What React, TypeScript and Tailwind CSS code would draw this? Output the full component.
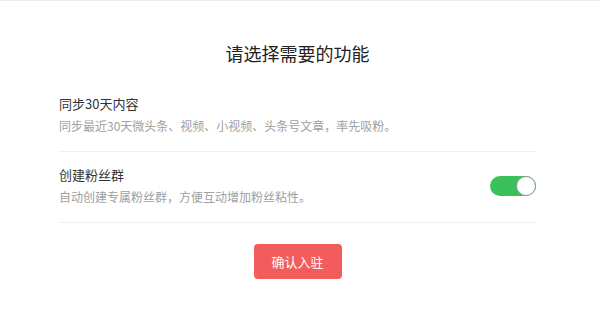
import React from "react";

export default function App() {
  return (
    <div
      className="w-[600px] h-[322px] bg-white border-t border-[#ededed] overflow-hidden"
      style={{ fontFamily: '"Noto Sans CJK SC", "Noto Sans", sans-serif' }}
    >
      <div className="w-[595px]">
        <div className="pt-[40px] flex flex-col items-center">
          <h1 className="text-[18px] leading-[24px] text-[#222] font-normal">请选择需要的功能</h1>
        </div>
        <div className="mx-[59px] mt-[16px]">
          <div className="flex items-center justify-between pt-[13px] pb-[15px] border-b border-[#f0f0f0]">
            <div>
              <div className="text-[13px] leading-[20px] text-[#333]">同步30天内容</div>
              <div className="mt-[2px] text-[12px] leading-[20px] text-[#a0a0a0]">
                同步最近30天微头条、视频、小视频、头条号文章，率先吸粉。
              </div>
            </div>
          </div>
          <div className="flex items-center justify-between pt-[13px] pb-[15px] border-b border-[#f0f0f0]">
            <div>
              <div className="text-[13px] leading-[20px] text-[#333]">创建粉丝群</div>
              <div className="mt-[2px] text-[12px] leading-[20px] text-[#a0a0a0]">
                自动创建专属粉丝群，方便互动增加粉丝粘性。
              </div>
            </div>
            <div className="w-[46px] h-[20px] rounded-full bg-[#3bc15a] flex items-center justify-end">
              <div className="w-[20px] h-[20px] rounded-full bg-white border border-[#8a9a8e]" />
            </div>
          </div>
        </div>
        <div className="flex justify-center mt-[21px]">
          <button className="w-[88px] h-[35px] rounded-[4px] bg-[#f25c5c] text-white text-[13px]">
            确认入驻
          </button>
        </div>
      </div>
    </div>
  );
}
